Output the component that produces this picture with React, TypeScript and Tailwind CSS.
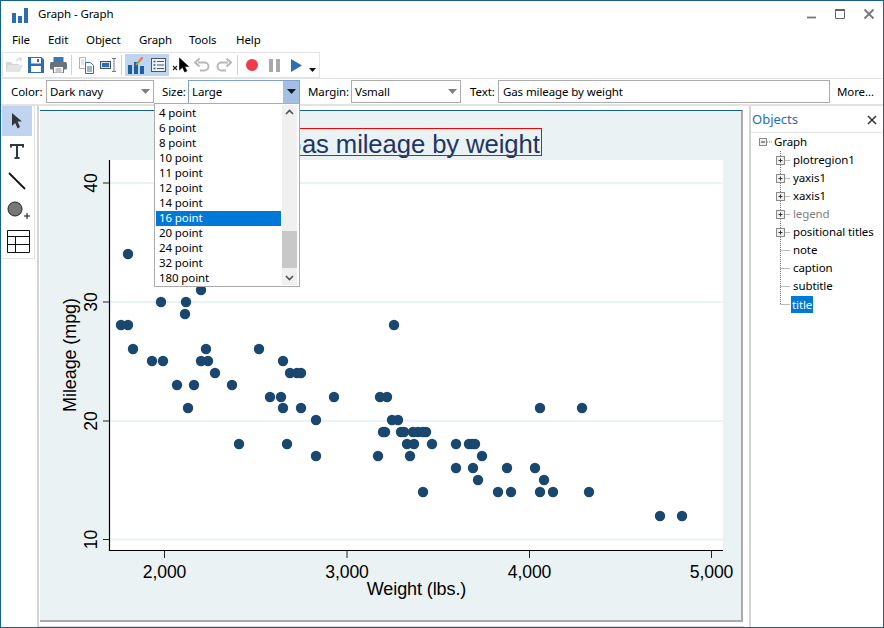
import React from "react";

const pts: [number, number][] = [
  [128,254],[201,290],[161,302],[186,302],[185,314],[121,325],[128,325],[394,325],[133,349],[206,349],[259,349],
  [152,361],[163,361],[201,361],[208,361],[283,361],[215,373],[290,373],[297,373],[301,373],[177,385],[194,385],[232,385],
  [270,397],[281,397],[334,397],[380,397],[387,397],[188,408],[283,408],[301,408],[540,408],[582,408],[316,420],[392,420],[398,420],
  [383,432],[385,432],[401,432],[404,432],[413,432],[418,432],[423,432],[426,432],[239,444],[287,444],[407,444],[414,444],[432,444],[456,444],[469,444],[472,444],[475,444],
  [316,456],[378,456],[410,456],[482,456],[456,468],[473,468],[507,468],[535,468],[478,480],[544,480],[423,492],[498,492],[511,492],[540,492],[553,492],[589,492],[660,516],[682,516],
];
const sizes = ["4 point","6 point","8 point","10 point","11 point","12 point","14 point","16 point","20 point","24 point","32 point","180 point"];
const yTicks = [[183,"40"],[302,"30"],[421,"20"],[539.5,"10"]] as [number,string][];
const xTicks = [[164.5,"2,000"],[347,"3,000"],[529.5,"4,000"],[711.5,"5,000"]] as [number,string][];

function Plot() {
  return (
    <svg width="701" height="509" viewBox="40 111 701 509" className="block" style={{ fontFamily: '"Liberation Sans", Arial, sans-serif' }}>
      <rect x="110" y="160" width="613" height="390" fill="#ffffff" />
      {yTicks.map(([y]) => <rect key={y} x="110" y={y - 1} width="613" height="2" fill="#eaf2f3" />)}
      <path d="M109.5 160V550.5H723" fill="none" stroke="#000" strokeWidth="1.2" />
      {yTicks.map(([y, t]) => (
        <g key={t}>
          <path d={`M103 ${y}H109`} stroke="#222" strokeWidth="1" />
          <text transform={`translate(96.5 ${y}) rotate(-90)`} textAnchor="middle" fontSize="17.6" fill="#000">{t}</text>
        </g>
      ))}
      {xTicks.map(([x, t]) => (
        <g key={t}>
          <path d={`M${x} 551V558`} stroke="#222" strokeWidth="1" />
          <text x={x} y="578" textAnchor="middle" fontSize="17.6" fill="#000">{t}</text>
        </g>
      ))}
      <text x="416.5" y="595" textAnchor="middle" fontSize="18" fill="#000">Weight (lbs.)</text>
      <text transform="translate(76 355) rotate(-90)" textAnchor="middle" fontSize="18" fill="#000">Mileage (mpg)</text>
      {pts.map(([x, y], i) => <circle key={i} cx={x} cy={y} r="5.2" fill="#1a476f" />)}
      <text x="282" y="153" fontSize="25.7" fill="#1f3564">Gas mileage by weight</text>
      <rect x="282.5" y="128.5" width="259" height="27" fill="none" stroke="#f00" strokeWidth="1" />
    </svg>
  );
}

function Btn({ active, children }: { active?: boolean; children: React.ReactNode }) {
  return <div className={`w-[22px] h-[22px] flex items-center justify-center ${active ? "bg-[#bfd4ee]" : ""}`}>{children}</div>;
}
const Sep = () => <div className="w-px h-[20px] bg-[#d0d0d0] mx-[1.5px] shrink-0" />;

function Toolbar() {
  return (
    <div className="ml-[1px] w-[318px] h-[26px] border border-[#e3e3e3] flex items-center">
      <Btn><svg width="17" height="16" viewBox="0 0 17 16"><path d="M0 5h5l1.5 2H13v8H0z" fill="#d6d6d6"/><path d="M0 15l2.5-7H17l-3 7z" fill="#e4e4e4"/><path d="M10 4c1.5-2 3-2.5 5-2M13 .5l2.5 1.5L14 4" fill="none" stroke="#dadada" strokeWidth="1.3"/></svg></Btn>
      <Btn><svg width="16" height="16" viewBox="0 0 16 16"><path d="M0 0h13.5L16 2.5V16H0z" fill="#2c6fb0"/><rect x="3" y="1" width="10" height="5.5" fill="#fff"/><rect x="9" y="2" width="2" height="3" fill="#2c6fb0"/><rect x="3" y="9" width="10" height="6" fill="#fff"/></svg></Btn>
      <Btn><svg width="17" height="16" viewBox="0 0 17 16"><rect x="3.5" y="0" width="10" height="6" fill="#3a78b5"/><rect x="0" y="5" width="17" height="7.5" rx="1.5" fill="#67727c"/><rect x="3.5" y="9.5" width="10" height="6.5" fill="#fff" stroke="#67727c"/><path d="M5.5 12h6M5.5 14h6" stroke="#67727c" strokeWidth="0.8"/></svg></Btn>
      <Sep />
      <div className="w-[2px]" />
      <Btn><svg width="17" height="17" viewBox="0 0 17 17"><path d="M1.5 .5h6v11h-6z" fill="#fff" stroke="#a8b2bb"/><path d="M3 3h3M3 5h3M3 7h3" stroke="#c0c8d0"/><path d="M7.5 5.5h5l3 3v8h-8z" fill="#fff" stroke="#2c6fb0"/><path d="M9 10h5M9 12h5M9 14h5" stroke="#2c6fb0"/></svg></Btn>
      <Btn><svg width="17" height="14" viewBox="0 0 17 14"><rect x=".5" y="3.5" width="10" height="7" fill="#cfe0f0" stroke="#456"/><rect x="2" y="5" width="7" height="4" fill="#2c6fb0"/><path d="M12 .5h4M14 .5v13M12 13.5h4" stroke="#777" fill="none"/></svg></Btn>
      <Sep />
      <div className="w-[2px]" />
      <Btn active><svg width="16" height="17" viewBox="0 0 16 17"><rect x="0" y="8" width="4" height="9" fill="#1f5f9f"/><rect x="6" y="5" width="4" height="12" fill="#1f5f9f"/><rect x="12" y="9" width="4" height="8" fill="#1f5f9f"/><path d="M8 8l6-7" stroke="#d98a2b" strokeWidth="2"/><path d="M13.2 2l1.2-1.5" stroke="#e0607a" strokeWidth="2"/></svg></Btn>
      <Btn active><svg width="15" height="14" viewBox="0 0 15 14"><rect x=".5" y=".5" width="14" height="13" fill="#eef3fa" stroke="#4a5866"/><path d="M2.5 3.5h2M2.5 7h2M2.5 10.5h2" stroke="#1f5f9f" strokeWidth="1.3"/><path d="M6 3.5h7M6 7h7M6 10.5h7" stroke="#4a5866"/></svg></Btn>
      <div className="w-[22px]" />
      <Btn><svg width="16" height="14" viewBox="0 0 16 14"><path d="M4 4.5h6.5a4 4 0 0 1 0 8H6" fill="none" stroke="#b8b8b8" strokeWidth="2"/><path d="M5.5 0.5L1 4.5l4.5 4" fill="none" stroke="#b8b8b8" strokeWidth="2"/></svg></Btn>
      <Btn><svg width="16" height="14" viewBox="0 0 16 14" className="-scale-x-100"><path d="M4 4.5h6.5a4 4 0 0 1 0 8H6" fill="none" stroke="#b8b8b8" strokeWidth="2"/><path d="M5.5 0.5L1 4.5l4.5 4" fill="none" stroke="#b8b8b8" strokeWidth="2"/></svg></Btn>
      <Sep />
      <div className="w-[2px]" />
      <Btn><div className="w-[12px] h-[12px] rounded-full bg-[#f03a4a]" /></Btn>
      <Btn><svg width="11" height="13" viewBox="0 0 11 13"><rect width="4" height="13" fill="#aaaaaa"/><rect x="7" width="4" height="13" fill="#aaaaaa"/></svg></Btn>
      <Btn><svg width="11" height="13" viewBox="0 0 11 13"><path d="M0 0L11 6.5L0 13z" fill="#2f6db0"/></svg></Btn>
      <svg width="7" height="4" viewBox="0 0 7 4" className="mt-[10px] ml-[2px]"><path d="M0 0h7L3.5 4z" fill="#111"/></svg>
    </div>
  );
}

function Combo({ value, width, focus }: { value: string; width: string; focus?: boolean }) {
  return (
    <div className={`${width} flex items-center pl-[3px] bg-white border ${focus ? "h-[24px] border-[#7da2ce]" : "h-[23px] border-[#ababab]"}`}>
      <span className="flex-1">{value}</span>
      {focus ? (
        <div className="w-[16px] h-full bg-[#a3bfe3] flex items-center justify-center"><svg width="9" height="5" viewBox="0 0 9 5"><path d="M0 0h9L4.5 5z" fill="#1a1a1a"/></svg></div>
      ) : (
        <div className="w-[16px] flex items-center justify-center"><svg width="9" height="5" viewBox="0 0 9 5"><path d="M0 0h9L4.5 5z" fill="#808080"/></svg></div>
      )}
    </div>
  );
}

function FormatBar() {
  return (
    <div className="h-[26px] border-t border-[#e3e3e3] flex items-center pl-[10px]">
      <span className="w-[35px]">Color:</span>
      <Combo value="Dark navy" width="w-[108px]" />
      <span className="ml-[8px] w-[26px] ">Size:</span>
      <Combo value="Large" width="w-[112px]" focus />
      <span className="ml-[8px] w-[43px]">Margin:</span>
      <Combo value="Vsmall" width="w-[110px]" />
      <span className="ml-[9px] w-[28px]">Text:</span>
      <div className="w-[332px] h-[23px] pl-[4px] border border-[#ababab] flex items-center bg-white">Gas mileage by weight</div>
      <span className="ml-[7px]">More...</span>
    </div>
  );
}

function SizeMenu() {
  return (
    <div className="absolute left-[153px] top-[102px] w-[146px] h-[184px] bg-white border border-[#ababab] flex pl-[1px] pt-[1px] z-10">
      <div className="w-[125px] pt-[1px]">
        {sizes.map((s) => (
          <div key={s} className={`h-[15px] leading-[14px] pl-[3px] ${s === "16 point" ? "bg-[#0078d7] text-white" : ""}`}>{s}</div>
        ))}
      </div>
      <div className="ml-[1px] w-[15px] h-[180px] bg-[#f0f0f0] flex flex-col items-center">
        <svg width="15" height="15" viewBox="0 0 15 15" className="shrink-0"><path d="M4 9l3.5-3.5L11 9" fill="none" stroke="#505050" strokeWidth="1.6"/></svg>
        <div className="w-full h-[37px] bg-[#c8c8c8] mt-[111px] mb-auto shrink-0" />
        <svg width="15" height="15" viewBox="0 0 15 15" className="shrink-0"><path d="M4 6l3.5 3.5L11 6" fill="none" stroke="#505050" strokeWidth="1.6"/></svg>
      </div>
    </div>
  );
}

function Tools() {
  return (
    <div className="w-[33px] h-[153px] ml-[1px] border-r border-b border-[#e3e3e3] flex flex-col">
      <div className="h-[30px] w-[30px] bg-[#c0d4f0] flex items-center justify-center">
        <svg width="14" height="18" viewBox="0 0 14 18"><path d="M2 1l10 8.5H7.6L10 15l-2.4 1.5-2.4-5.5L2 14z" fill="#33383d"/></svg>
      </div>
      <div className="h-[30px] w-[30px] flex items-center justify-center">
        <svg width="14" height="15" viewBox="0 0 14 15"><path d="M1 3.5V1h12v2.5M7 1v13M4.5 14h5" fill="none" stroke="#33383d" strokeWidth="2"/></svg>
      </div>
      <div className="h-[30px] w-[30px] flex items-center justify-center">
        <svg width="18" height="18" viewBox="0 0 18 18"><path d="M1 1l16 16" stroke="#111" strokeWidth="1.8"/></svg>
      </div>
      <div className="h-[30px] w-[30px] flex items-center justify-center pl-[3px]">
        <svg width="24" height="20" viewBox="0 0 24 20"><circle cx="8" cy="8" r="7" fill="#777" stroke="#222"/><path d="M17 15h6M20 12v6" stroke="#111"/></svg>
      </div>
      <div className="h-[30px] w-[30px] flex items-center justify-center pl-[3px]">
        <svg width="23" height="23" viewBox="0 0 23 23"><path d="M.5.5h22v22H.5zM.5 6.5h22M.5 14.5h22M8.5 6.5v16" fill="none" stroke="#111"/></svg>
      </div>
    </div>
  );
}

function TreeRow({ label, box, last, muted, sel }: { label: string; box?: boolean; last?: boolean; muted?: boolean; sel?: boolean }) {
  return (
    <div className={`h-[18px] flex items-center pl-[23px] ${muted ? "text-[#808080]" : ""}`}>
      <svg width="18" height="18" viewBox="0 0 18 18" className="shrink-0">
        <path d={last ? "M6.5 0V9" : "M6.5 0V18"} stroke="#777" strokeDasharray="1 1" />
        <path d="M6.5 9.5H16" stroke="#777" strokeDasharray="1 1" />
        {box && <><rect x="2.5" y="5.5" width="8" height="8" fill="#f0f0f0" stroke="#8a8a8a"/><path d="M4.5 9.5h4M6.5 7.5v4" stroke="#334"/></>}
      </svg>
      <span className={sel ? "bg-[#0078d7] text-white px-[1px] h-[17px] leading-[17px] -ml-[1px]" : "pl-[1px]"}>{label}</span>
    </div>
  );
}

export default function App() {
  return (
    <div className="relative w-[884px] h-[628px] bg-white border border-[#17618f] flex flex-col overflow-hidden text-[11.5px] tracking-[-0.1px] text-black" style={{ fontFamily: '"Noto Sans", "Open Sans", sans-serif' }}>
      <div className="h-[27px] flex items-center shrink-0">
        <svg width="16" height="16" viewBox="0 0 16 16" className="ml-[11px]"><rect y="6" width="4" height="10" fill="#2c6fb0"/><rect x="6" y="9" width="4" height="7" fill="#2c6fb0"/><rect x="12" y="1" width="4" height="15" fill="#2c6fb0"/></svg>
        <span className="ml-[10px] mb-[2px]">Graph - Graph</span>
        <div className="ml-auto flex items-center mr-[8px] gap-[17px] mb-[1px]">
          <svg width="12" height="12" viewBox="0 0 12 12"><path d="M2 9.5h9" stroke="#777" strokeWidth="1.8"/></svg>
          <svg width="12" height="12" viewBox="0 0 12 12"><path d="M1.5 1.5h9v9h-9z" fill="none" stroke="#666"/><path d="M1 2h10" stroke="#666" strokeWidth="2"/></svg>
          <svg width="12" height="12" viewBox="0 0 12 12"><path d="M1.5 1.5l9 9M10.5 1.5l-9 9" stroke="#777" strokeWidth="1.8"/></svg>
        </div>
      </div>
      <div className="h-[24px] flex items-center shrink-0 pl-[11px]">
        <span className="w-[36px]">File</span>
        <span className="w-[38px]">Edit</span>
        <span className="w-[53px]">Object</span>
        <span className="w-[50px]">Graph</span>
        <span className="w-[47px]">Tools</span>
        <span>Help</span>
      </div>
      <Toolbar />
      <FormatBar />
      <div className="flex-1 flex border-t-2 border-[#e3e3e3] min-h-0">
        <Tools />
        <div className="ml-[2px] w-[707px] border-l-2 border-b border-[#d4d4d4] pl-[1px] pt-[4px] pb-[1px]">
          <div className="w-[703px] h-[512px] bg-[#eaf2f3] border-t border-t-[#17618f] border-r-2 border-r-[#aaaaaa] border-b-2 border-b-[#aaaaaa]">
            <Plot />
          </div>
        </div>
        <div className="ml-[5px] flex-1 border-l-2 border-[#d4d4d4] pr-[1px]">
          <div className="h-[27px] border-b border-[#e3e3e3] flex items-center pl-[1px] pr-[5px] pt-[1px]">
            <span className="text-[13px] tracking-normal text-[#1f6fb5]">Objects</span>
            <svg width="10" height="10" viewBox="0 0 10 10" className="ml-auto"><path d="M1 1l8 8M9 1l-8 8" stroke="#333" strokeWidth="1.5"/></svg>
          </div>
          <div className="h-[18px] flex items-center pl-[6px]">
            <svg width="16" height="18" viewBox="0 0 16 18" className="shrink-0">
              <rect x="2.5" y="5.5" width="7" height="7" fill="#f0f0f0" stroke="#8a8a8a"/><path d="M4 9h4" stroke="#334"/><path d="M10 9h5" stroke="#777" strokeDasharray="1 1"/>
            </svg>
            <span className="ml-[1px]">Graph</span>
          </div>
          <TreeRow label="plotregion1" box />
          <TreeRow label="yaxis1" box />
          <TreeRow label="xaxis1" box />
          <TreeRow label="legend" box muted />
          <TreeRow label="positional titles" box />
          <TreeRow label="note" />
          <TreeRow label="caption" />
          <TreeRow label="subtitle" />
          <TreeRow label="title" last sel />
        </div>
      </div>
      <SizeMenu />
      <svg width="20" height="16" viewBox="0 0 20 16" className="absolute left-[170px] top-[56px] z-10">
        <path d="M2 9l4 4M6 9l-4 4" stroke="#222" strokeWidth="1.2" />
        <path d="M8.5 1v12l3-2.8 2.2 4.8 2.2-1-2.2-4.6H17.5z" fill="#000" stroke="#000" strokeWidth="0.6" />
      </svg>
    </div>
  );
}
